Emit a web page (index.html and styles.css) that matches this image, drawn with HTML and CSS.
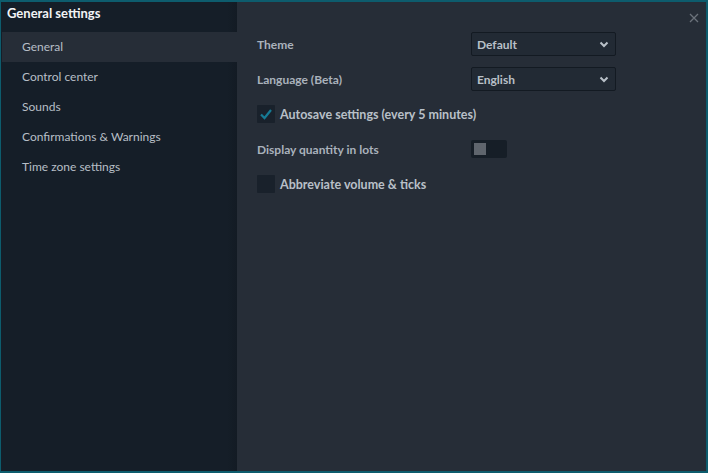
FILE: index.html
```html
<!DOCTYPE html>
<html>
<head>
<meta charset="utf-8">
<link rel="stylesheet" href="styles.css">
</head>
<body>
<div class="window">
  <aside class="sidebar">
    <div class="title">General settings</div>
    <nav class="nav">
      <div class="nav-item active">General</div>
      <div class="nav-item">Control center</div>
      <div class="nav-item">Sounds</div>
      <div class="nav-item">Confirmations &amp; Warnings</div>
      <div class="nav-item">Time zone settings</div>
    </nav>
  </aside>
  <main class="content">
    <div class="close"><svg width="10" height="10" viewBox="0 0 10 10"><path d="M1 1L9 9M9 1L1 9" stroke="#6b727b" stroke-width="1.3"/></svg></div>
    <div class="row">
      <span class="label">Theme</span>
      <div class="select"><span>Default</span><svg width="10" height="7" viewBox="0 0 10 7"><path d="M1.5 1.5L5 5L8.5 1.5" fill="none" stroke="#b9c0c8" stroke-width="2"/></svg></div>
    </div>
    <div class="row">
      <span class="label">Language (Beta)</span>
      <div class="select"><span>English</span><svg width="10" height="7" viewBox="0 0 10 7"><path d="M1.5 1.5L5 5L8.5 1.5" fill="none" stroke="#b9c0c8" stroke-width="2"/></svg></div>
    </div>
    <div class="check-row first">
      <span class="checkbox"><svg width="14" height="12" viewBox="0 0 14 12"><path d="M2 6.5L5.5 10L12 2" fill="none" stroke="#167a94" stroke-width="2.2"/></svg></span>
      <span class="check-label">Autosave settings (every 5 minutes)</span>
    </div>
    <div class="row toggle-row">
      <span class="label">Display quantity in lots</span>
      <span class="toggle"><span class="knob"></span></span>
    </div>
    <div class="check-row">
      <span class="checkbox"></span>
      <span class="check-label">Abbreviate volume &amp; ticks</span>
    </div>
  </main>
</div>
</body>
</html>
```
FILE: styles.css
```css
* { box-sizing: border-box; }
html, body { margin: 0; padding: 0; background: #262d37; }
body { font-family: "Lato", "Noto Sans", sans-serif; }
.window {
  width: 708px;
  height: 473px;
  border: 1px solid #0d5c6d;
  border-width: 2px 2px 2px 1px;
  display: flex;
  background: #262d37;
}
.sidebar {
  width: 236px;
  background: linear-gradient(to right, #151e28 0, #151e28 226px, #131b24 236px);
  padding-left: 1px;
}
.title {
  color: #f2f4f6;
  font-weight: 700;
  font-size: 13px;
  height: 30px;
  padding: 3px 0 0 5px;
}
.nav-item {
  height: 30px;
  line-height: 30px;
  padding-left: 20px;
  font-size: 12px;
  color: #b7bec6;
}
.nav-item.active { background: #262d37; }
.content {
  flex: 1;
  position: relative;
  padding: 30px 0 0 20px;
}
.close { position: absolute; right: 7px; top: 5px; }
.row {
  display: flex;
  align-items: center;
  height: 24px;
  margin-bottom: 11px;
}
.label {
  width: 214px;
  font-size: 12px;
  font-weight: 700;
  color: #aab2bc;
}
.select {
  width: 145px;
  height: 24px;
  background: #222a34;
  border: 1px solid #131a22;
  border-radius: 2px;
  display: flex;
  align-items: center;
  justify-content: space-between;
  padding: 0 6px 0 5px;
  font-size: 12px;
  font-weight: 700;
  color: #b9c0c8;
}
.check-row {
  display: flex;
  align-items: center;
  height: 18px;
  margin: 0;
}
.check-row.first { margin: 14px 0 17px; }
.checkbox {
  width: 18px;
  height: 18px;
  background: #19212b;
  border-radius: 1px;
  display: flex;
  align-items: center;
  justify-content: center;
  margin-right: 5px;
}
.check-label {
  font-size: 12.5px;
  font-weight: 700;
  color: #b9c0c8;
}
.toggle-row { height: 18px; margin: 0 0 17px; }
.toggle {
  width: 36px;
  height: 18px;
  background: #161e27;
  border-radius: 2px;
  padding: 3px;
  display: flex;
}
.knob { width: 12px; height: 12px; background: #5f656d; }
```
